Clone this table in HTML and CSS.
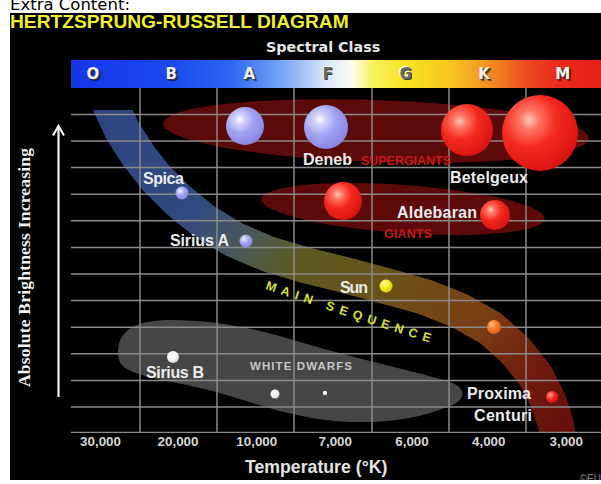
FILE: index.html
```html
<!DOCTYPE html>
<html>
<head>
<meta charset="utf-8">
<link rel="stylesheet" href="styles.css">
</head>
<body>
<div class="caption">Extra Content:</div>
<div class="figure">
  <div class="title">HERTZSPRUNG-RUSSELL DIAGRAM</div>
  <div class="spectral">Spectral Class</div>
  <div class="bar">
    <span>O</span><span>B</span><span>A</span><span class="dark">F</span><span class="dark">G</span><span>K</span><span>M</span>
  </div>
  <div class="plot-row">
    <svg class="yaxis" viewBox="10 88 61 345" xmlns="http://www.w3.org/2000/svg">
      <text class="ylabel" x="0" y="0" transform="translate(29.5 267.5) rotate(-90)" text-anchor="middle" textLength="239">Absolute Brightness Increasing</text>
      <line class="arrow" x1="58.5" y1="126" x2="58.5" y2="397"/>
      <polyline class="arrow" points="53,135.5 58.5,126 64,135.5"/>
    </svg>
    <svg class="plot" viewBox="71 88 530 345" xmlns="http://www.w3.org/2000/svg">
      <defs>
        <linearGradient id="msgrad" gradientUnits="userSpaceOnUse" x1="100" y1="110" x2="560" y2="433">
          <stop offset="0" stop-color="#2f4581"/>
          <stop offset="0.24" stop-color="#32497f"/>
          <stop offset="0.36" stop-color="#4d5a52"/>
          <stop offset="0.44" stop-color="#5c5a22"/>
          <stop offset="0.6" stop-color="#6a5218"/>
          <stop offset="0.78" stop-color="#7a3c12"/>
          <stop offset="0.9" stop-color="#701a0e"/>
          <stop offset="1" stop-color="#66100c"/>
        </linearGradient>
        <clipPath id="msclip"><rect x="60" y="110" width="560" height="340"/></clipPath>
        <radialGradient id="lav" cx="0.36" cy="0.33" r="0.72">
          <stop offset="0" stop-color="#ffffff"/>
          <stop offset="0.16" stop-color="#d6d6fb"/>
          <stop offset="0.5" stop-color="#a2a2f2"/>
          <stop offset="1" stop-color="#8585e0"/>
        </radialGradient>
        <radialGradient id="red" cx="0.36" cy="0.33" r="0.72">
          <stop offset="0" stop-color="#ffc8b8"/>
          <stop offset="0.18" stop-color="#ff7564"/>
          <stop offset="0.5" stop-color="#f42a1e"/>
          <stop offset="1" stop-color="#d81212"/>
        </radialGradient>
        <radialGradient id="sun" cx="0.36" cy="0.33" r="0.72">
          <stop offset="0" stop-color="#ffffb0"/>
          <stop offset="0.45" stop-color="#f8ee22"/>
          <stop offset="1" stop-color="#d8c812"/>
        </radialGradient>
        <radialGradient id="orange" cx="0.36" cy="0.33" r="0.72">
          <stop offset="0" stop-color="#ffc090"/>
          <stop offset="0.45" stop-color="#f8802c"/>
          <stop offset="1" stop-color="#dc5a18"/>
        </radialGradient>
        <radialGradient id="white" cx="0.36" cy="0.33" r="0.72">
          <stop offset="0" stop-color="#ffffff"/>
          <stop offset="0.6" stop-color="#f4f4f4"/>
          <stop offset="1" stop-color="#d4d4d4"/>
        </radialGradient>
        <path id="mspath" d="M 265 289 Q 348 317 440 346"/>
      </defs>

      <ellipse class="band-red" cx="376" cy="131" rx="213" ry="31" transform="rotate(2 376 131)"/>
      <ellipse class="band-red" cx="403" cy="209" rx="142" ry="24" transform="rotate(4 403 209)"/>
      <polyline class="band-ms" clip-path="url(#msclip)" points="104,91 110,104 122,130 138,155 156,178 178,200 205,222 235,240 268,254 305,265 345,275 386,286 425,297 460,311 490,328 515,350 535,375 548,400 556,425 560,450"/>
      <path class="band-wd" d="M 118 352 C 118 328 140 320 170 320 C 215 320 255 328 300 342 C 360 360 420 372 450 382 C 467 388 466 400 450 406 C 420 418 390 423 350 422 C 300 420 260 405 220 393 C 180 382 140 378 125 368 C 119 363 118 358 118 352 Z"/>

      <g class="grid">
        <line x1="140" y1="88" x2="140" y2="433"/>
        <line x1="217" y1="88" x2="217" y2="433"/>
        <line x1="294" y1="88" x2="294" y2="433"/>
        <line x1="372" y1="88" x2="372" y2="433"/>
        <line x1="449" y1="88" x2="449" y2="433"/>
        <line x1="526" y1="88" x2="526" y2="433"/>
        <line x1="71" y1="114.4" x2="601" y2="114.4"/>
        <line x1="71" y1="141" x2="601" y2="141"/>
        <line x1="71" y1="167.6" x2="601" y2="167.6"/>
        <line x1="71" y1="194.2" x2="601" y2="194.2"/>
        <line x1="71" y1="220.8" x2="601" y2="220.8"/>
        <line x1="71" y1="247.4" x2="601" y2="247.4"/>
        <line x1="71" y1="274" x2="601" y2="274"/>
        <line x1="71" y1="300.6" x2="601" y2="300.6"/>
        <line x1="71" y1="327.2" x2="601" y2="327.2"/>
        <line x1="71" y1="353.8" x2="601" y2="353.8"/>
        <line x1="71" y1="380.4" x2="601" y2="380.4"/>
        <line x1="71" y1="407" x2="601" y2="407"/>
        <line x1="71" y1="432.6" x2="601" y2="432.6"/>
      </g>

      <circle cx="245" cy="126" r="19" fill="url(#lav)"/>
      <circle cx="326" cy="127" r="22" fill="url(#lav)"/>
      <circle cx="182" cy="193" r="6.5" fill="url(#lav)"/>
      <circle cx="246" cy="241" r="6.5" fill="url(#lav)"/>
      <circle cx="467" cy="130" r="26" fill="url(#red)"/>
      <circle cx="540" cy="133" r="38" fill="url(#red)"/>
      <circle cx="343" cy="201" r="19" fill="url(#red)"/>
      <circle cx="495" cy="215" r="15" fill="url(#red)"/>
      <circle cx="386" cy="286" r="6.5" fill="url(#sun)"/>
      <circle cx="494" cy="327" r="7" fill="url(#orange)"/>
      <circle cx="552" cy="397" r="6" fill="url(#red)"/>
      <circle cx="173" cy="357" r="6" fill="url(#white)"/>
      <circle cx="275" cy="394" r="4.5" fill="url(#white)"/>
      <circle cx="325" cy="393" r="2.2" fill="url(#white)"/>

      <text class="lbl" x="303" y="165" textLength="49">Deneb</text>
      <text class="tag-red" x="361" y="165" textLength="90">SUPERGIANTS</text>
      <text class="lbl" x="450" y="183" textLength="78">Betelgeux</text>
      <text class="lbl" x="397" y="218" textLength="80">Aldebaran</text>
      <text class="tag-red" x="384" y="238" textLength="48">GIANTS</text>
      <text class="lbl" x="143" y="184" textLength="41">Spica</text>
      <text class="lbl" x="170" y="246" textLength="59">Sirius A</text>
      <text class="lbl" x="340" y="293" textLength="28">Sun</text>
      <text class="ms-text"><textPath href="#mspath" textLength="173">MAIN SEQUENCE</textPath></text>
      <text class="lbl" x="146" y="378" textLength="58">Sirius B</text>
      <text class="wd-text" x="250" y="370" textLength="102">WHITE DWARFS</text>
      <text class="lbl" x="467" y="399" textLength="64">Proxima</text>
      <text class="lbl" x="474" y="421" textLength="58">Centuri</text>
    </svg>
  </div>
  <div class="ticks">
    <span>30,000</span><span>20,000</span><span>10,000</span><span>7,000</span><span>6,000</span><span>4,000</span><span>3,000</span>
  </div>
  <div class="xtitle">
    <span>Temperature (°K)</span>
    <span class="copy">©EU</span>
  </div>
</div>
</body>
</html>
```

FILE: styles.css
```css
html, body {
  margin: 0;
  background: #ffffff;
  overflow: hidden;
}

body {
  padding-left: 10px;
  font-family: "Liberation Sans", Arial, sans-serif;
}

.caption {
  font-family: "DejaVu Sans", Verdana, sans-serif;
  font-size: 16.5px;
  line-height: 13px;
  height: 15px;
  margin-top: -2px;
  color: #000000;
  white-space: nowrap;
}

.figure {
  width: 591px;
  height: 467px;
  background: #000000;
  overflow: hidden;
  display: flex;
  flex-direction: column;
}

.title {
  margin-top: -1px;
  height: 20px;
  line-height: 20px;
  font-family: "Liberation Sans", Arial, sans-serif;
  font-size: 19.2px;
  font-weight: bold;
  color: #f0f02c;
  white-space: nowrap;
}

.spectral {
  margin-top: 7px;
  height: 16px;
  line-height: 16px;
  padding-left: 256px;
  font-family: "DejaVu Sans", Verdana, sans-serif;
  font-size: 14.3px;
  font-weight: bold;
  color: #e6e6e6;
  white-space: nowrap;
}

.bar {
  margin: 5px 0 0 61px;
  height: 28px;
  display: flex;
  gap: 64.2px;
  padding-left: 15px;
  line-height: 28px;
  font-family: "DejaVu Sans", Verdana, sans-serif;
  font-size: 15px;
  font-weight: bold;
  background: linear-gradient(90deg,
    #1536e6 0%, #1a48ee 18%, #2a66f2 30%, #78a6f6 40%, #d8e6fa 48%,
    #fdfdf0 53%, #faf25a 57%, #f7e324 63%, #f6c420 72%, #f38e22 79%,
    #ee4a20 86%, #e82a1c 92%, #e62018 100%);
}

.bar span {
  width: 14px;
  flex: none;
  text-align: center;
  color: #f2f2f2;
  text-shadow: 1px 1px 0 #3a3a3a, 2px 2px 1px rgba(0, 0, 0, 0.55);
}

.bar span.dark {
  color: #6a6a6a;
  text-shadow: -1px -1px 0 #ffffff, 1px 1px 0 #3a3a3a;
}

.plot-row {
  display: flex;
  height: 345px;
  flex: none;
}

.yaxis {
  width: 61px;
  height: 345px;
  flex: none;
}

.plot {
  width: 530px;
  height: 345px;
  flex: none;
}

.ylabel {
  font-family: "Liberation Serif", "Times New Roman", serif;
  font-weight: bold;
  font-size: 17.5px;
  fill: #f2f2f2;
}

.arrow {
  fill: none;
  stroke: #f2f2f2;
  stroke-width: 2.2;
}

.band-red {
  fill: #5c0a0a;
}

.band-ms {
  fill: none;
  stroke: url(#msgrad);
  stroke-width: 36;
  stroke-linejoin: round;
}

.band-wd {
  fill: #464646;
}

.grid line {
  stroke: #8a8a8a;
  stroke-width: 1.5;
}

.lbl {
  font-family: "Liberation Sans", Arial, sans-serif;
  font-weight: bold;
  font-size: 16px;
  fill: #ececec;
}

.tag-red {
  font-family: "Liberation Sans", Arial, sans-serif;
  font-weight: bold;
  font-size: 12.5px;
  fill: #c41a1a;
}

.wd-text {
  font-family: "Liberation Sans", Arial, sans-serif;
  font-weight: bold;
  font-size: 11.5px;
  fill: #c8c8c8;
}

.ms-text {
  font-family: "Liberation Sans", Arial, sans-serif;
  font-weight: bold;
  font-size: 12.5px;
  fill: #d6e034;
}

.ticks {
  display: grid;
  grid-template-columns: 77px 78px 79.5px 77.5px 76px 77.5px 77.5px;
  margin-left: 52px;
  height: 18px;
  line-height: 18px;
  flex: none;
  font-family: "Liberation Sans", Arial, sans-serif;
  font-size: 13.4px;
  font-weight: bold;
  color: #d8d8d8;
  text-align: center;
}

.xtitle {
  display: flex;
  margin-top: 4px;
  height: 24px;
  line-height: 24px;
  flex: none;
  padding-left: 235px;
  font-family: "Liberation Sans", Arial, sans-serif;
  font-size: 17.7px;
  font-weight: bold;
  color: #e4e4e4;
  white-space: nowrap;
}

.copy {
  margin-left: auto;
  align-self: flex-end;
  font-size: 10px;
  line-height: 10px;
  margin-bottom: -5px;
  font-weight: normal;
  color: #8a8a8a;
}
```
